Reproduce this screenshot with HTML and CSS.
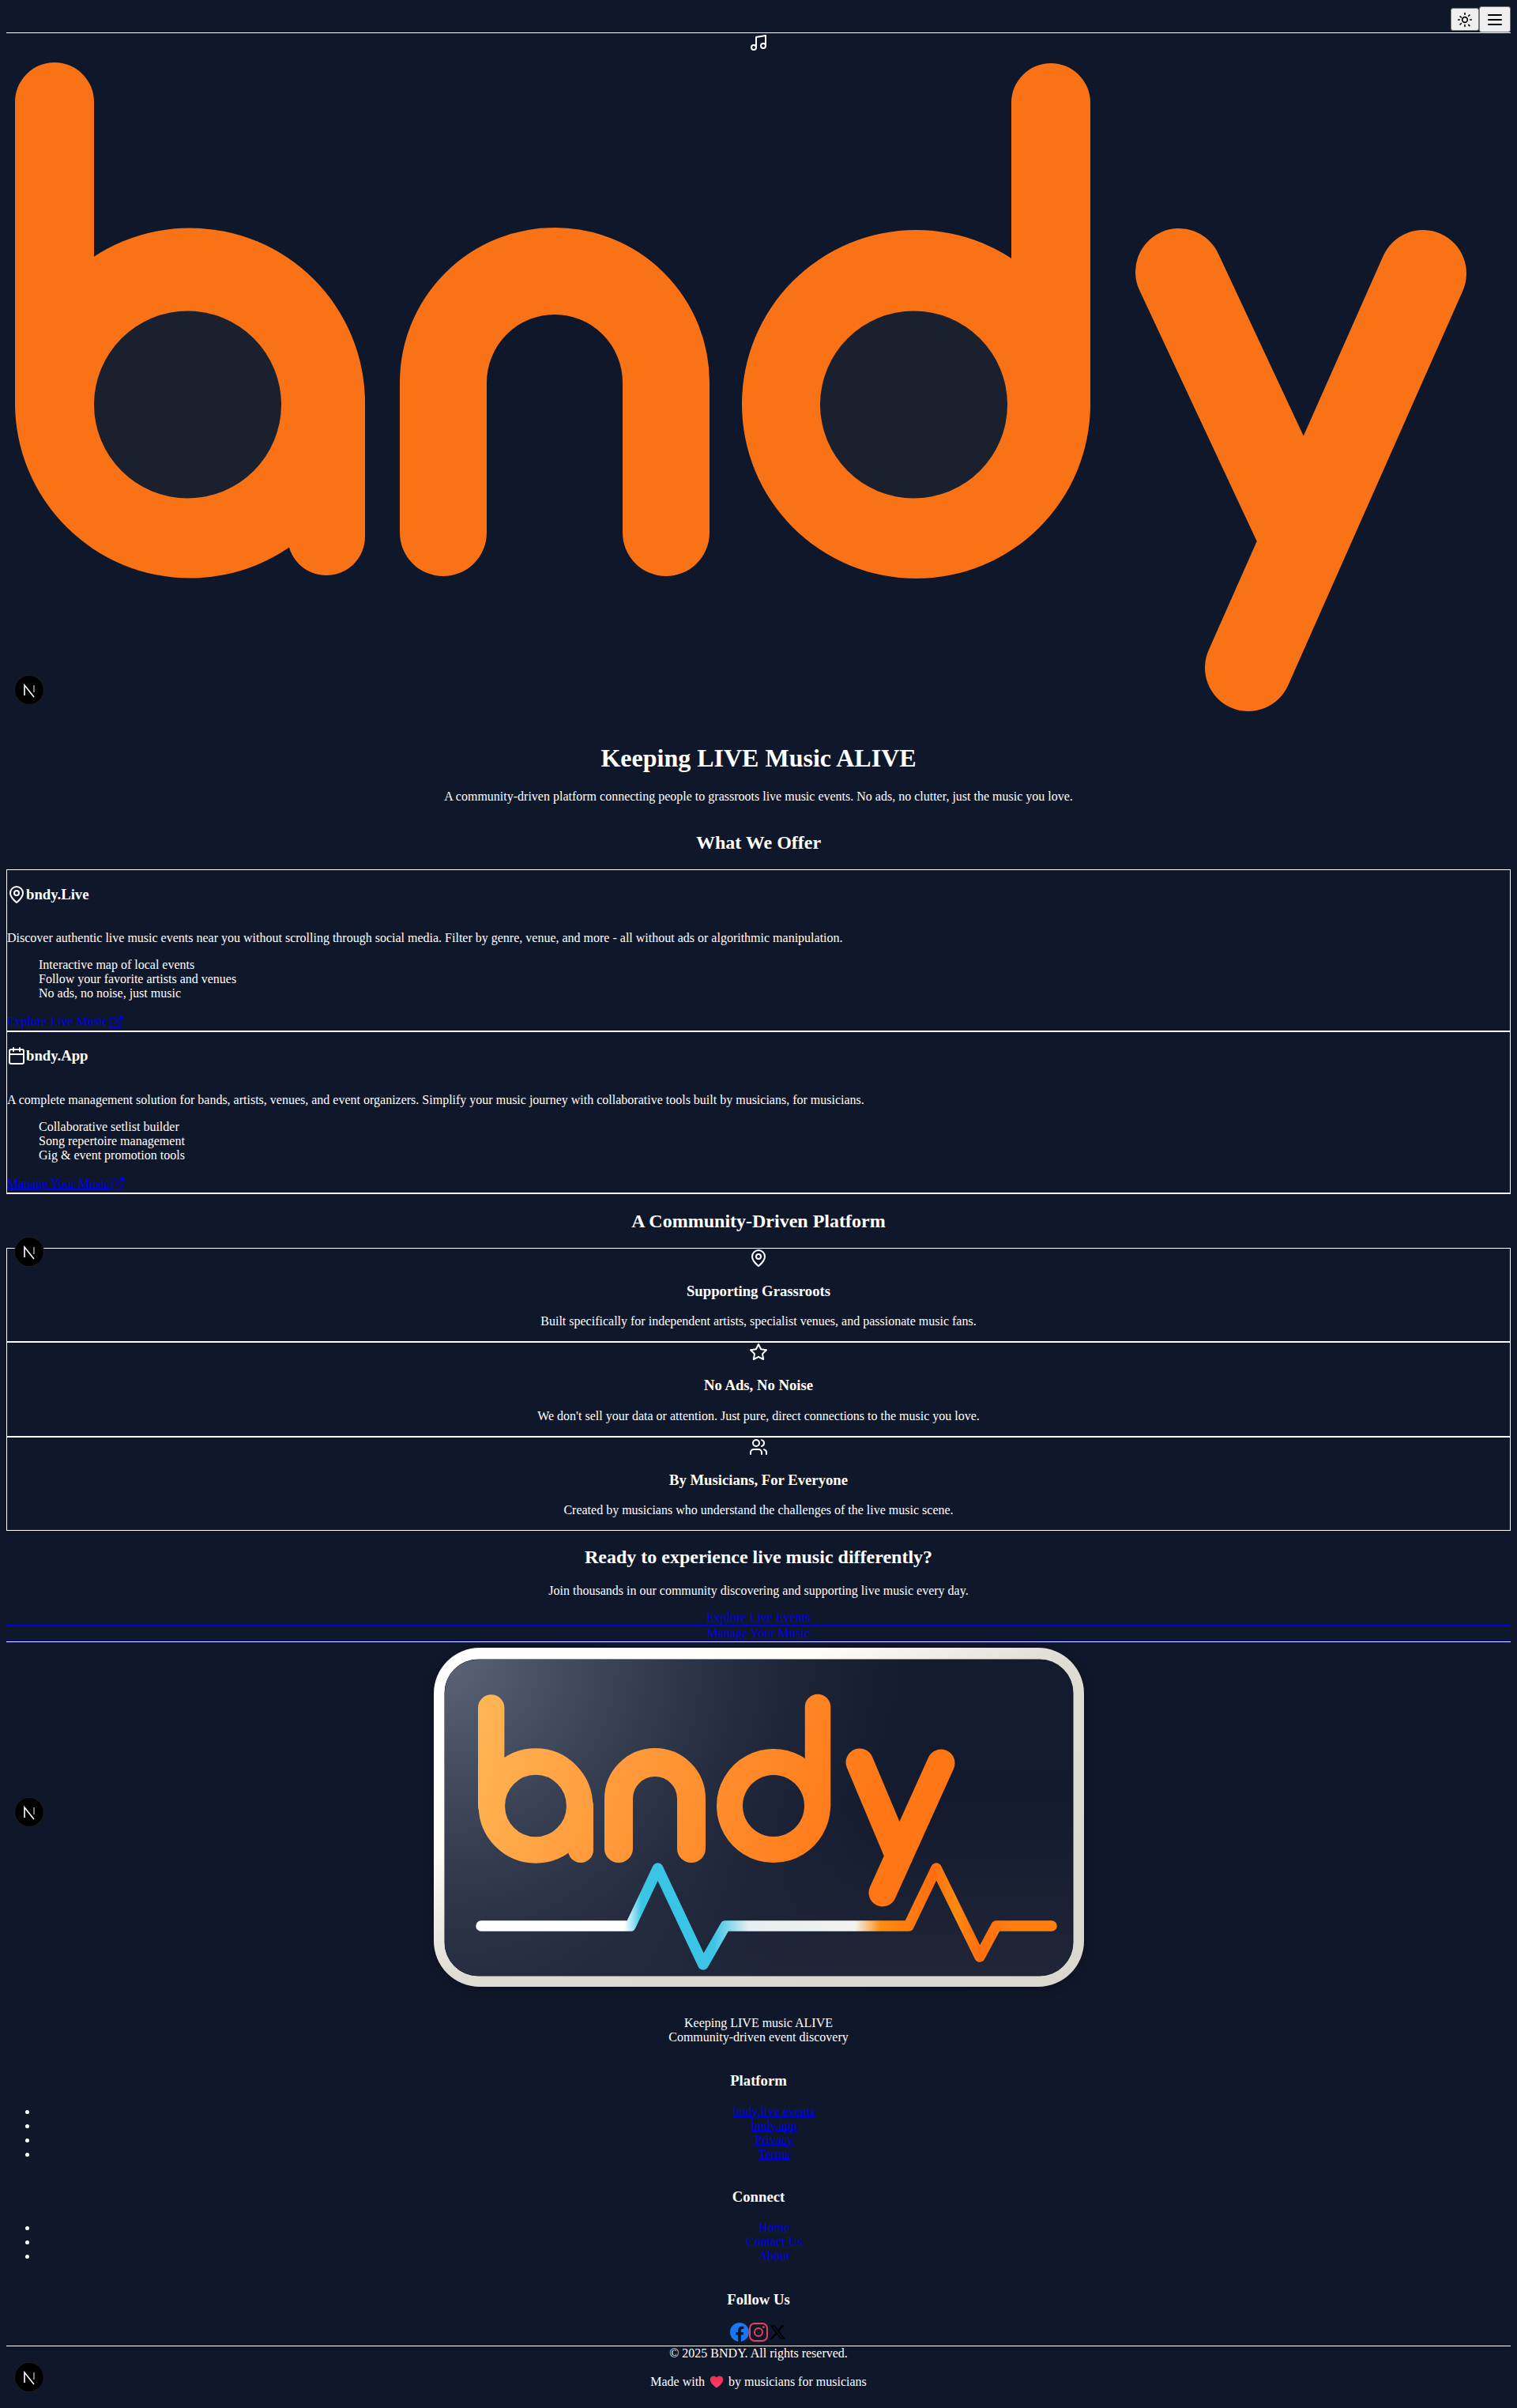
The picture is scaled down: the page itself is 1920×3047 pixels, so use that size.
FILE: index.html
```html
<!DOCTYPE html>
<html lang="en">
<head>
<meta charset="utf-8">
<title>bndy</title>
<link rel="stylesheet" href="styles.css">
</head>
<body>
<header class="topbar">
  <button class="btn btn-sun" aria-label="Theme">
    <svg class="ic20 dark" viewBox="0 0 24 24"><circle cx="12" cy="12" r="4"/><path d="M12 2v2M12 20v2m-7.07-15.07 1.41 1.41m11.32 11.32 1.41 1.41M2 12h2M20 12h2M6.34 17.66l-1.41 1.41M19.07 4.93l-1.41 1.41"/></svg>
  </button>
  <button class="btn btn-menu" aria-label="Menu">
    <svg class="ic24 dark" viewBox="0 0 24 24"><path d="M4 12h16M4 6h16M4 18h16"/></svg>
  </button>
</header>
<main>
  <svg class="ic24 light center-icon" viewBox="0 0 24 24"><path d="M9 18V5l12-2v13"/><circle cx="6" cy="18" r="3"/><circle cx="18" cy="16" r="3"/></svg>
  <svg class="hero-logo" viewBox="8 66 1904 853.3" role="img" aria-label="bndy logo">
    <g fill="#f97316">
      <circle cx="240.5" cy="510" r="221.5"/>
      <circle cx="1159.5" cy="511.5" r="220.5"/>
    </g>
    <g fill="none" stroke="#f97316" stroke-linecap="round" stroke-linejoin="round">
      <path stroke-width="100" d="M69 129V510"/>
      <path stroke-width="98" d="M413 510V679"/>
      <path stroke-width="110" d="M561 674V484A141 141 0 0 1 843 484V674"/>
      <path stroke-width="100" d="M1330 130V511"/>
      <path stroke-width="110" d="M1492 344L1651 684M1801 346L1580 845"/>
    </g>
    <circle cx="237.5" cy="512" r="118.5" fill="#1a202e"/>
    <circle cx="1156.5" cy="512" r="118.5" fill="#1a202e"/>
  </svg>

  <section class="hero">
    <h1>Keeping LIVE Music ALIVE</h1>
    <p>A community-driven platform connecting people to grassroots live music events. No ads, no clutter, just the music you love.</p>
  </section>

  <section class="offer">
    <h2>What We Offer</h2>
    <article class="card">
      <div class="flowroot"><h3 class="card-title"><svg class="ic24 light" viewBox="0 0 24 24"><path d="M20 10c0 6-8 12-8 12s-8-6-8-12a8 8 0 0 1 16 0Z"/><circle cx="12" cy="10" r="3"/></svg>bndy.Live</h3></div>
      <p>Discover authentic live music events near you without scrolling through social media. Filter by genre, venue, and more - all without ads or algorithmic manipulation.</p>
      <ul class="plain">
        <li>Interactive map of local events</li>
        <li>Follow your favorite artists and venues</li>
        <li>No ads, no noise, just music</li>
      </ul>
      <a class="ext" href="#"><span>Explore Live Music</span><svg class="ic20 blue" viewBox="0 0 24 24"><path d="M15 3h6v6M10 14 21 3M18 13v6a2 2 0 0 1-2 2H5a2 2 0 0 1-2-2V8a2 2 0 0 1 2-2h6"/></svg></a>
    </article>
    <article class="card">
      <div class="flowroot"><h3 class="card-title"><svg class="ic24 light" viewBox="0 0 24 24"><path d="M8 2v4M16 2v4M3 10h18"/><rect x="3" y="4" width="18" height="18" rx="2"/></svg>bndy.App</h3></div>
      <p>A complete management solution for bands, artists, venues, and event organizers. Simplify your music journey with collaborative tools built by musicians, for musicians.</p>
      <ul class="plain">
        <li>Collaborative setlist builder</li>
        <li>Song repertoire management</li>
        <li>Gig &amp; event promotion tools</li>
      </ul>
      <a class="ext" href="#"><span>Manage Your Music</span><svg class="ic20 blue" viewBox="0 0 24 24"><path d="M15 3h6v6M10 14 21 3M18 13v6a2 2 0 0 1-2 2H5a2 2 0 0 1-2-2V8a2 2 0 0 1 2-2h6"/></svg></a>
    </article>
  </section>

  <section class="community">
    <h2>A Community-Driven Platform</h2>
    <article class="card card-center">
      <svg class="ic24 light center-icon" viewBox="0 0 24 24"><path d="M20 10c0 6-8 12-8 12s-8-6-8-12a8 8 0 0 1 16 0Z"/><circle cx="12" cy="10" r="3"/></svg>
      <h3>Supporting Grassroots</h3>
      <p>Built specifically for independent artists, specialist venues, and passionate music fans.</p>
    </article>
    <article class="card card-center">
      <svg class="ic24 light center-icon" viewBox="0 0 24 24"><polygon points="12 2 15.09 8.26 22 9.27 17 14.14 18.18 21.02 12 17.77 5.82 21.02 7 14.14 2 9.27 8.91 8.26 12 2"/></svg>
      <h3>No Ads, No Noise</h3>
      <p>We don't sell your data or attention. Just pure, direct connections to the music you love.</p>
    </article>
    <article class="card card-center">
      <svg class="ic24 light center-icon" viewBox="0 0 24 24"><path d="M16 21v-2a4 4 0 0 0-4-4H6a4 4 0 0 0-4 4v2"/><circle cx="9" cy="7" r="4"/><path d="M22 21v-2a4 4 0 0 0-3-3.87M16 3.13a4 4 0 0 1 0 7.75"/></svg>
      <h3>By Musicians, For Everyone</h3>
      <p>Created by musicians who understand the challenges of the live music scene.</p>
    </article>
  </section>

  <section class="cta">
    <h2>Ready to experience live music differently?</h2>
    <p>Join thousands in our community discovering and supporting live music every day.</p>
    <a class="cta-link" href="#">Explore Live Events</a>
    <a class="cta-link cta-second" href="#">Manage Your Music</a>
  </section>
</main>

<footer class="footer">
  <svg class="foot-logo" viewBox="500 2078 920 457" role="img" aria-label="bndy logo">
    <defs>
      <linearGradient id="frame" x1="0" y1="0" x2="1" y2="1">
        <stop offset="0" stop-color="#ffffff"/><stop offset=".3" stop-color="#fffdf6"/><stop offset=".5" stop-color="#dfdcd4"/><stop offset="1" stop-color="#dad7cf"/>
      </linearGradient>
      <linearGradient id="panelBase" x1="0" y1="0" x2="0" y2="1">
        <stop offset="0" stop-color="#141b2e"/><stop offset=".45" stop-color="#131a2d"/><stop offset="1" stop-color="#202638"/>
      </linearGradient>
      <radialGradient id="panelGlow" gradientUnits="userSpaceOnUse" cx="563" cy="2100" r="640">
        <stop offset="0" stop-color="#5c6478"/><stop offset=".45" stop-color="#343c50" stop-opacity=".85"/><stop offset="1" stop-color="#1a2135" stop-opacity="0"/>
      </radialGradient>
      <linearGradient id="letters" gradientUnits="userSpaceOnUse" x1="605" y1="2150" x2="1100" y2="2330">
        <stop offset="0" stop-color="#ffb655"/><stop offset=".35" stop-color="#ff9d3e"/><stop offset="1" stop-color="#ff7614"/>
      </linearGradient>
      <linearGradient id="pulse" gradientUnits="userSpaceOnUse" x1="604" y1="0" x2="1334" y2="0">
        <stop offset="0" stop-color="#fff"/><stop offset=".255" stop-color="#fff"/><stop offset=".285" stop-color="#3ac4e6"/><stop offset=".41" stop-color="#3ac4e6"/><stop offset=".47" stop-color="#e4eef0"/><stop offset=".655" stop-color="#f2f2ee"/><stop offset=".7" stop-color="#ff8c10"/><stop offset=".79" stop-color="#ff6e10"/><stop offset=".83" stop-color="#ff8a10"/><stop offset=".87" stop-color="#ff6e10"/><stop offset=".93" stop-color="#ff8010"/><stop offset="1" stop-color="#ff8010"/>
      </linearGradient>
      <filter id="soft" x="-5%" y="-5%" width="110%" height="110%"><feGaussianBlur stdDeviation="7"/></filter>
    </defs>
    <rect x="549" y="2087" width="823" height="429" rx="60" fill="#000" opacity=".3" filter="url(#soft)"/>
    <rect x="549" y="2085" width="823" height="429" rx="58" fill="url(#frame)"/>
    <rect x="563" y="2100" width="795" height="400" rx="42" fill="url(#panelBase)" stroke="#10172a"/>
    <rect x="563" y="2100" width="795" height="400" rx="42" fill="url(#panelGlow)"/>
    <g fill="none" stroke="url(#letters)" stroke-linecap="round" stroke-linejoin="round">
      <path stroke-width="33.4" d="M621.7 2161V2285"/>
      <path stroke-width="33.4" d="M622.4 2285a55.6 56 0 1 1 111.2 0a55.6 56 0 1 1-111.2 0"/>
      <path stroke-width="32" d="M735 2285V2341"/>
      <path stroke-width="36" d="M783 2339V2276A46 46 0 0 1 875 2276V2339"/>
      <path stroke-width="33" d="M979 2229.5a55.5 55.5 0 1 0 .01 0"/>
      <path stroke-width="32.5" d="M1035 2160V2285"/>
      <path stroke-width="35" d="M1088 2230L1138 2349M1191 2231L1117 2395"/>
    </g>
    <path fill="none" stroke="url(#pulse)" stroke-width="13.5" stroke-linecap="round" stroke-linejoin="round" d="M609 2437H798L832.5 2364L890 2486L918 2437H1150L1185 2364L1240 2476L1261 2437H1331"/>
  </svg>

  <p class="tag">Keeping LIVE music ALIVE<br>Community-driven event discovery</p>

  <div class="foot-col">
    <h3>Platform</h3>
    <ul>
      <li><a href="#">bndy.live events</a></li>
      <li><a href="#">bndy.app</a></li>
      <li><a href="#">Privacy</a></li>
      <li><a href="#">Terms</a></li>
    </ul>
  </div>
  <div class="foot-col">
    <h3>Connect</h3>
    <ul>
      <li><a href="#">Home</a></li>
      <li><a href="#">Contact Us</a></li>
      <li><a href="#">About</a></li>
    </ul>
  </div>
  <div class="foot-col">
    <h3>Follow Us</h3>
    <div class="social">
      <svg class="soc" viewBox="0 0 24 24"><path fill="#1877f2" d="M24 12.073c0-6.627-5.373-12-12-12s-12 5.373-12 12c0 5.99 4.388 10.954 10.125 11.854v-8.385H7.078v-3.47h3.047V9.43c0-3.007 1.792-4.669 4.533-4.669 1.312 0 2.686.235 2.686.235v2.953H15.83c-1.491 0-1.956.925-1.956 1.874v2.25h3.328l-.532 3.47h-2.796v8.385C19.612 23.027 24 18.062 24 12.073z"/></svg>
      <svg class="soc" viewBox="0 0 24 24"><rect x="1" y="1" width="22" height="22" rx="6" fill="none" stroke="#e4405f" stroke-width="2"/><circle cx="12" cy="12" r="5" fill="none" stroke="#e4405f" stroke-width="2"/><circle cx="18.3" cy="5.7" r="1.4" fill="#e4405f"/></svg>
      <svg class="soc soc-x" viewBox="0 0 24 24"><path fill="#000" d="M18.901 1.153h3.68l-8.04 9.19L24 22.846h-7.406l-5.8-7.584-6.638 7.584H.474l8.6-9.83L0 1.154h7.594l5.243 6.932ZM17.61 20.644h2.039L6.486 3.24H4.298Z"/></svg>
    </div>
  </div>
  <div class="legal">
    <p class="copy">© 2025 BNDY. All rights reserved.</p>
    <p class="made">Made with <svg class="heart" viewBox="0 0 24 24"><defs><linearGradient id="hg" x1="0" y1="0" x2="0" y2="1"><stop offset="0" stop-color="#f0304a"/><stop offset="1" stop-color="#ff3d78"/></linearGradient></defs><path fill="url(#hg)" d="M12 22S1 15 1 8a6 6 0 0 1 11-3.2A6 6 0 0 1 23 8c0 7-11 14-11 14Z"/></svg> by musicians for musicians</p>
  </div>
</footer>

<div class="nx nx-1"><svg viewBox="0 0 36 36"><path d="M12 25V12L24 27" fill="none" stroke="#fff" stroke-width="1.6"/><path class="nx-fade" d="M24 12V21"/></svg></div>
<div class="nx nx-2"><svg viewBox="0 0 36 36"><path d="M12 25V12L24 27" fill="none" stroke="#fff" stroke-width="1.6"/><path class="nx-fade" d="M24 12V21"/></svg></div>
<div class="nx nx-3"><svg viewBox="0 0 36 36"><path d="M12 25V12L24 27" fill="none" stroke="#fff" stroke-width="1.6"/><path class="nx-fade" d="M24 12V21"/></svg></div>
<div class="nx nx-4"><svg viewBox="0 0 36 36"><path d="M12 25V12L24 27" fill="none" stroke="#fff" stroke-width="1.6"/><path class="nx-fade" d="M24 12V21"/></svg></div>
</body>
</html>
```

FILE: styles.css
```css
html { background: #0f172a; }
body {
  margin: 8px;
  background: #0f172a;
  color: #fff;
  font-family: "Liberation Serif", "Times New Roman", serif;
  font-size: 16px;
}
svg { display: block; }

.topbar {
  display: flex;
  justify-content: flex-end;
  align-items: center;
  height: 33px;
  border-bottom: 1px solid #fff;
}
.btn {
  display: flex;
  align-items: center;
  justify-content: center;
  background: #efefef;
  border: 1px solid #767676;
  border-radius: 3px;
  padding: 0;
}
.btn-sun { width: 36px; height: 29px; }
.btn-menu { width: 40px; height: 33px; }

.ic20 { width: 20px; height: 20px; }
.ic24 { width: 24px; height: 24px; flex: none; }
.ic20, .ic24 {
  fill: none;
  stroke-width: 2;
  stroke-linecap: round;
  stroke-linejoin: round;
}
.dark { stroke: #000; }
.light { stroke: #fff; }
.blue { stroke: #00e; flex: none; }
.center-icon { margin: 0 auto; }

.hero-logo { width: 1904px; height: 853.3px; }

.hero, .offer, .community, .cta, .flowroot, .foot-col, .legal { display: flow-root; }
.hero, .cta, .community h2, .offer h2, .card-center, .footer { text-align: center; }

.card { border: 1px solid #fff; }
.offer { margin-bottom: 1px; }
.offer .card:last-child {
  border-bottom-width: 2px;
  padding-bottom: 0.8px;
}
.card-title {
  display: flex;
  align-items: center;
}
.plain { list-style: none; }
.ext {
  display: inline-flex;
  align-items: center;
  color: #00e;
  vertical-align: top;
  height: 21.26px;
}
.cta-link {
  display: block;
  color: #00e;
  border-bottom: 1px solid #00e;
}
.cta-second { border-top: 1px solid #00e; }

.footer { border-top: 1px solid #fff; }
.foot-logo { width: 920px; height: 457px; margin: 0 auto; }
.tag { margin: 16px 0; }
.foot-col a { color: #00e; }
.social {
  display: flex;
  justify-content: center;
  padding-bottom: 5px;
}
.soc { width: 24px; height: 24px; }
.soc-x { padding: 2px; box-sizing: border-box; }
.legal { border-top: 1px solid #fff; }
.copy { margin: 0 0 16px; }
.made { margin: 0 0 16px; height: 21px; line-height: 21px; }
.heart { display: inline-block; width: 22px; height: 18px; vertical-align: -4px; }

.nx {
  position: absolute;
  left: 19px;
  width: 36px;
  height: 36px;
  border-radius: 50%;
  background: #000;
  box-shadow: 0 0 0 1px #1f1f1f;
}
.nx-fade { fill: none; stroke: #fff; stroke-width: 1.6; stroke-opacity: 0.6; }
.nx-1 { top: 855px; }
.nx-2 { top: 1566px; }
.nx-3 { top: 2275px; }
.nx-4 { top: 2990px; }
```
